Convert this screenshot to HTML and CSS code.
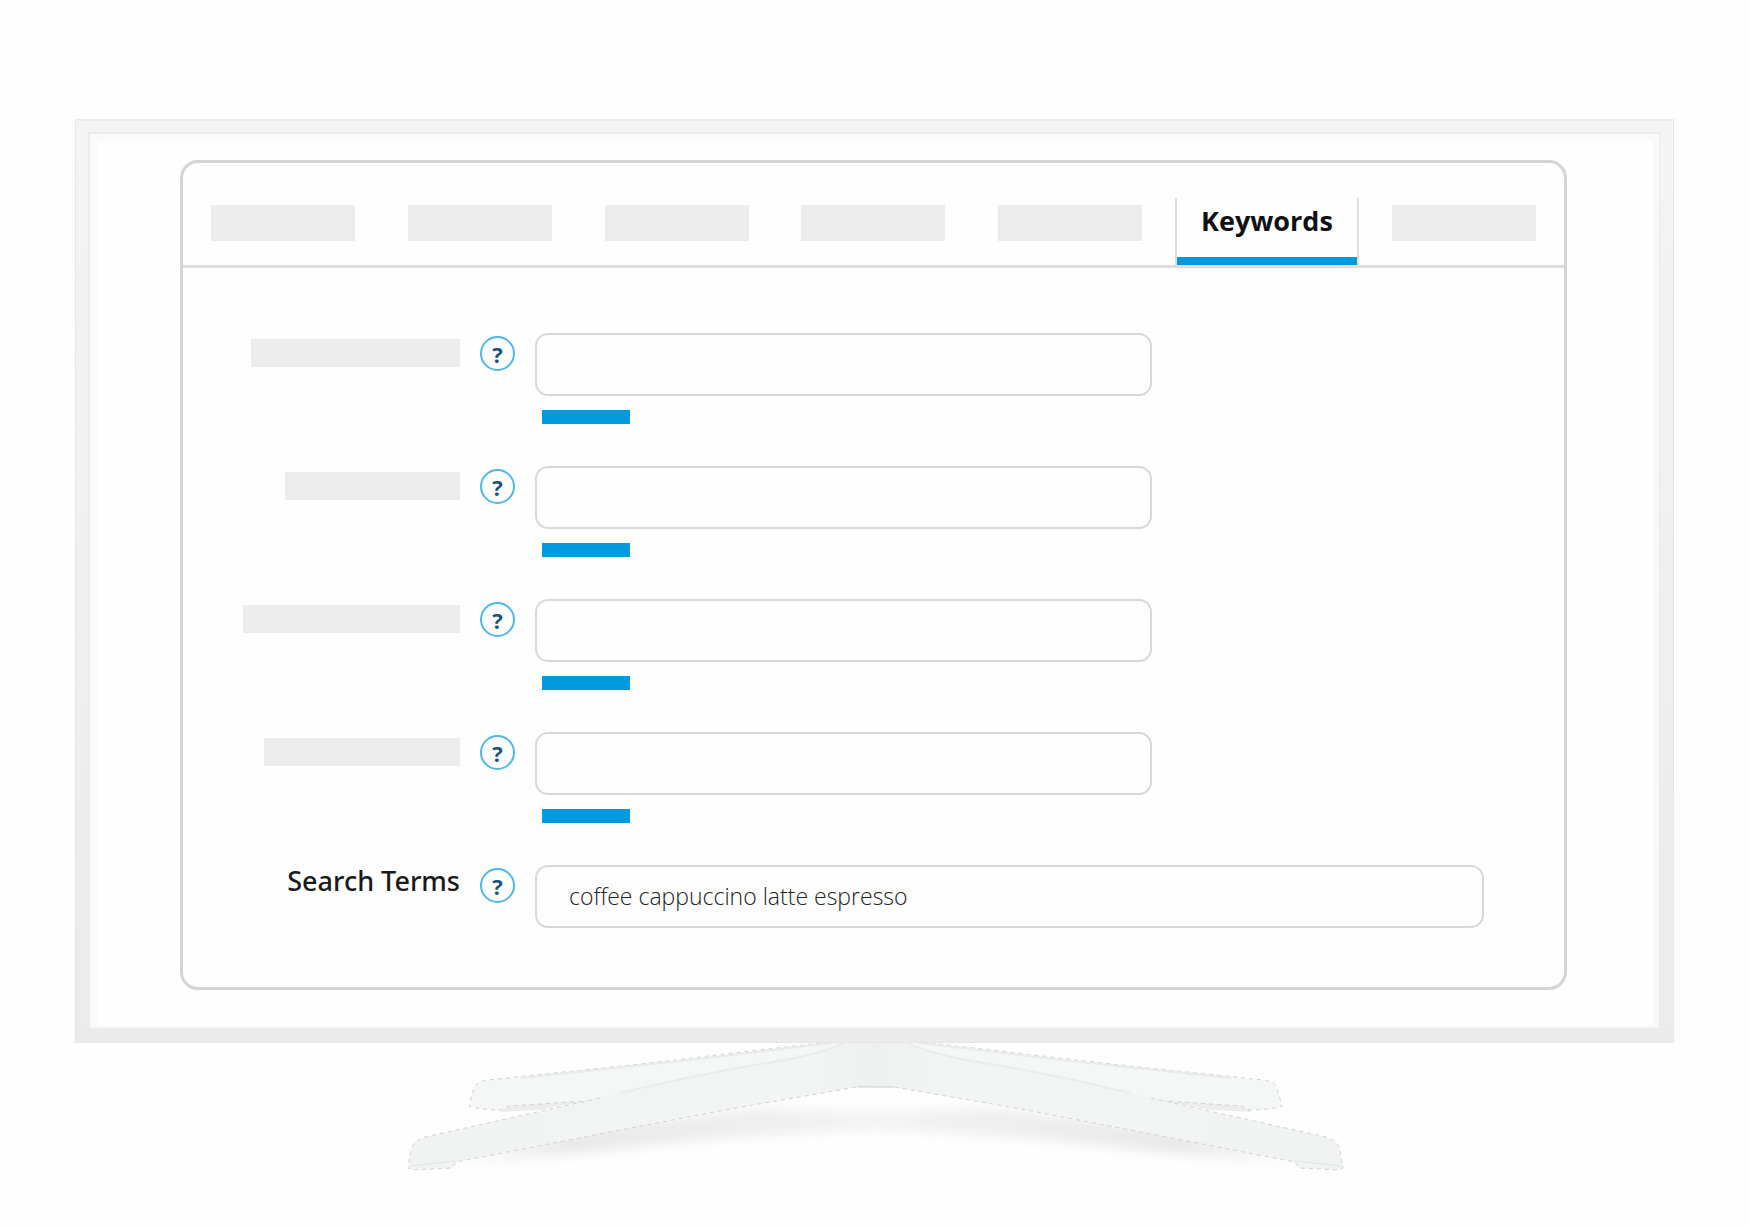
FILE: index.html
```html
<!DOCTYPE html>
<html lang="en">
<head>
    <meta charset="UTF-8">
    <meta name="viewport" content="width=device-width, initial-scale=1.0">
    <title>Keywords</title>
    <link rel="stylesheet" href="styles.css">
</head>
<body>
    <main class="stage">
        <div class="tv">
            <div class="screen">
                <div class="panel">
                    <nav class="tabs">
                        <button type="button" class="tab" aria-label="Tab 1"><span class="bar"></span></button>
                        <button type="button" class="tab" aria-label="Tab 2"><span class="bar"></span></button>
                        <button type="button" class="tab" aria-label="Tab 3"><span class="bar"></span></button>
                        <button type="button" class="tab" aria-label="Tab 4"><span class="bar"></span></button>
                        <button type="button" class="tab" aria-label="Tab 5"><span class="bar"></span></button>
                        <button type="button" class="tab active">Keywords</button>
                        <button type="button" class="tab" aria-label="Tab 7"><span class="bar"></span></button>
                    </nav>

                    <form class="fields">
                        <div class="row">
                            <label for="field1" class="blank w1" aria-label="Field 1"></label>
                            <button type="button" class="help">?</button>
                            <div class="control">
                                <input type="text" id="field1">
                                <a href="#" class="more" aria-label="Add more"></a>
                            </div>
                        </div>
                        <div class="row">
                            <label for="field2" class="blank w2" aria-label="Field 2"></label>
                            <button type="button" class="help">?</button>
                            <div class="control">
                                <input type="text" id="field2">
                                <a href="#" class="more" aria-label="Add more"></a>
                            </div>
                        </div>
                        <div class="row">
                            <label for="field3" class="blank w3" aria-label="Field 3"></label>
                            <button type="button" class="help">?</button>
                            <div class="control">
                                <input type="text" id="field3">
                                <a href="#" class="more" aria-label="Add more"></a>
                            </div>
                        </div>
                        <div class="row">
                            <label for="field4" class="blank w4" aria-label="Field 4"></label>
                            <button type="button" class="help">?</button>
                            <div class="control">
                                <input type="text" id="field4">
                                <a href="#" class="more" aria-label="Add more"></a>
                            </div>
                        </div>
                        <div class="row">
                            <label for="terms" class="text-label">Search Terms</label>
                            <button type="button" class="help">?</button>
                            <div class="control">
                                <input type="text" id="terms" class="wide" value="coffee cappuccino latte espresso">
                            </div>
                        </div>
                    </form>
                </div>
            </div>
        </div>

        <!-- TV stand -->
        <svg class="stand" viewBox="75 1043 1599 150" aria-hidden="true">
            <defs>
                <linearGradient id="neck" x1="0" x2="1">
                    <stop offset="0" stop-color="#f1f3f3"/>
                    <stop offset="0.85" stop-color="#f3f4f4"/>
                    <stop offset="1" stop-color="#eef0f0"/>
                </linearGradient>
                <linearGradient id="fade">
                    <stop offset="0" stop-color="#dcdcdc" stop-opacity="0"/>
                    <stop offset="0.3" stop-color="#dcdcdc"/>
                    <stop offset="1" stop-color="#dcdcdc" stop-opacity="0.5"/>
                </linearGradient>
                <filter id="soft" x="-20%" y="-60%" width="140%" height="220%">
                    <feGaussianBlur stdDeviation="6"/>
                </filter>
                <g id="side">
                    <path d="M440 1160 L600 1128 L760 1108 L876 1112 L876 1130 Q740 1134 610 1150 Q500 1162 440 1164Z" fill="url(#fade)" opacity="0.65" filter="url(#soft)"/>
                    <path d="M509 1105 L585 1101 L540 1110 L500 1112Z" fill="#ececec"/>
                    <path d="M876 1042 L830 1042 L700 1058 L488 1080 Q477 1081 474 1088 L469 1106 Q480 1110 503 1110 L509 1106 L587 1101 L700 1090 L850 1056Z" fill="#f5f6f6"/>
                    <path d="M820 1043 L640 1064 L488 1080 Q477 1081 474 1088 L469 1106 Q480 1110 503 1110 L509 1106 L587 1101" fill="none" stroke="#cfd2d2" stroke-width="1" stroke-dasharray="4 4"/>
                    <path d="M832 1043 L690 1060 L520 1078" fill="none" stroke="#e9ebeb" stroke-width="2"/>
                    <path d="M876 1042 L844 1042 Q815 1056 760 1064 Q690 1076 600 1098 L425 1137 Q414 1140 411 1150 L408 1168 L412 1170 L452 1168 L456 1162 L600 1134 L730 1109 L857 1087 L876 1087Z" fill="url(#neck)"/>
                    <path d="M844 1043 Q815 1056 760 1064 Q690 1076 620 1093" fill="none" stroke="#eaecec" stroke-width="2"/>
                    <path d="M600 1098 L425 1137 Q414 1140 411 1150 L408 1168 L412 1170 L452 1168 L456 1162 L600 1134 L730 1109 L857 1087" fill="none" stroke="#cfd2d2" stroke-width="1" stroke-dasharray="4 4"/>
                    <path d="M857 1087 L876 1087" stroke="#cccece"/>
                    <path d="M410 1166 L456 1161" stroke="#e2e4e4"/>
                </g>
            </defs>
            <use href="#side"/>
            <use href="#side" transform="translate(1751) scale(-1 1)"/>
        </svg>
    </main>
</body>
</html>
```
FILE: styles.css
```css
* {
    box-sizing: border-box;
}
body {
    margin: 0;
    background-color: #fefefe;
    font-family: "Open Sans", "Noto Sans", sans-serif;
}
.stage {
    padding: 119px 75px 0;
}
.tv {
    padding: 11px 13px 13px 12px;
    border: 1px solid #e6e6e6;
    border-top: 2px solid #ececec;
    background: linear-gradient(#f4f4f4, #ebebeb);
}
.screen {
    padding: 26px 92px 38px 90px;
    border: 2px solid #ebebeb;
    border-right-width: 1px;
    border-bottom-width: 1px;
    background-color: #fefefe;
    box-shadow: inset 8px 7px 0 #fafafa, inset -5px -2px 0 #f8f8f8;
}
.panel {
    border: 3px solid #d4d4d4;
    border-radius: 18px;
}

/* Tabs */
.tabs {
    display: grid;
    grid-template-columns: repeat(7, 1fr);
    padding: 35px 2px 0;
    border-bottom: 3px solid #dedede;
}
.tab {
    display: flex;
    justify-content: center;
    justify-self: center;
    width: 144px;
    height: 67px;
    padding: 7px 0 0;
    border: none;
    background: none;
    font-family: inherit;
    cursor: pointer;
}
.bar {
    width: 144px;
    height: 36px;
    background-color: #ececec;
}
.tab.active {
    width: 184px;
    padding: 5px 0 0;
    border: 2px solid #dedede;
    border-width: 0 2px;
    box-shadow: inset 0 -8px 0 #0099dd;
    font-size: 27px;
    line-height: 36px;
    font-weight: 700;
    color: #111;
}

/* Form */
.fields {
    padding: 65px 80px 59px 0;
}
.row {
    display: grid;
    grid-template-columns: 277px 35px 1fr;
    column-gap: 20px;
    height: 133px;
}
.row:last-child {
    height: 63px;
}
.blank {
    justify-self: end;
    height: 28px;
    margin-top: 6px;
    background-color: #ececec;
}
.w1 { width: 209px; }
.w2 { width: 175px; }
.w3 { width: 217px; }
.w4 { width: 196px; }
.text-label {
    justify-self: end;
    font-family: "Noto Sans", sans-serif;
    font-size: 27px;
    line-height: 32px;
    font-weight: 500;
    white-space: nowrap;
    color: #1a1a1a;
}
.help {
    width: 35px;
    height: 35px;
    margin-top: 3px;
    padding: 0;
    border: 2px solid #4fb6e8;
    border-radius: 50%;
    background: none;
    font-family: inherit;
    font-size: 22px;
    line-height: 28px;
    font-weight: 700;
    color: #17547a;
    cursor: pointer;
}
.control input {
    display: block;
    width: 65%;
    height: 63px;
    padding: 0 32px 2px;
    border: 2px solid #d8d8d8;
    border-radius: 13px;
    background: none;
    font-family: inherit;
    font-size: 23px;
    font-weight: 300;
    color: #222;
}
.control input.wide {
    width: 100%;
}
.more {
    display: block;
    width: 88px;
    height: 14px;
    margin: 14px 0 0 7px;
    background-color: #0099dd;
}
.stand {
    display: block;
    width: 100%;
}
```
